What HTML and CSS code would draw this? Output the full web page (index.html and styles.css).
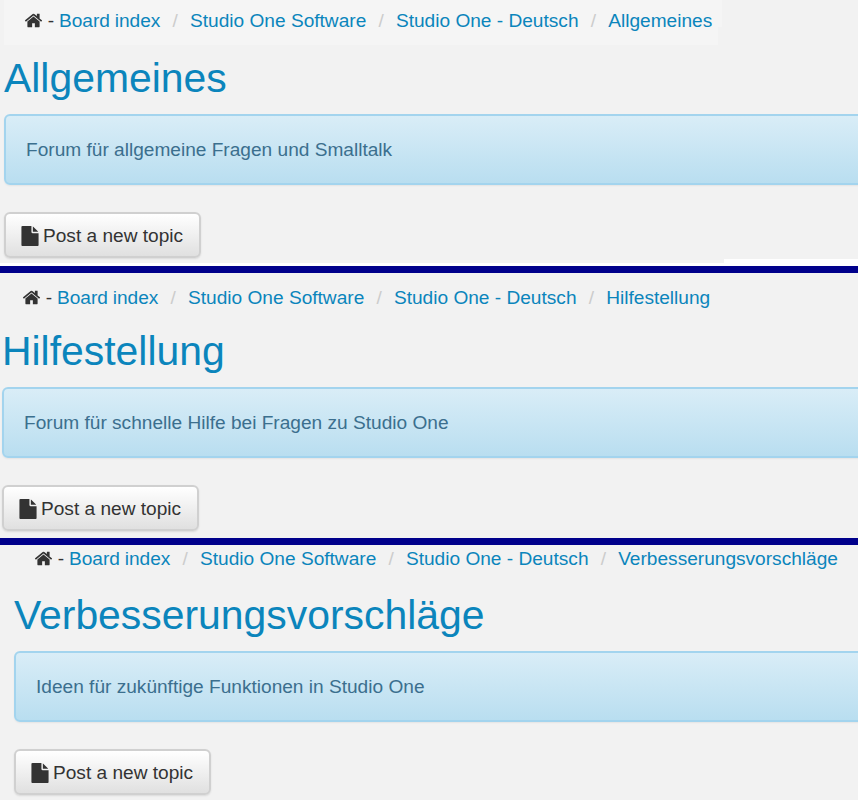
FILE: index.html
```html
<!DOCTYPE html>
<html lang="en">
<head>
  <meta charset="UTF-8">
  <meta name="viewport" content="width=device-width, initial-scale=1.0">
  <title>Forum overview</title>
  <link rel="stylesheet" href="styles.css">
</head>
<body>
  <svg class="icon-defs" width="0" height="0" aria-hidden="true">
    <symbol id="icon-home" viewBox="0 0 1792 1792">
      <path d="M1472 992v480q0 26-19 45t-45 19h-384v-384h-256v384h-384q-26 0-45-19t-19-45v-480q0-1 .5-3t.5-3l575-474 575 474q1 2 1 6zm223-69l-62 74q-8 9-21 11h-3q-13 0-21-7l-692-577-692 577q-12 8-24 7-13-2-21-11l-62-74q-8-10-7-23.500t11-21.500l719-599q32-26 76-26t76 26l244 204v-195q0-14 9-23t23-9h192q14 0 23 9t9 23v408l219 182q10 8 11 21.500t-7 23.500z"/>
    </symbol>
    <symbol id="icon-file" viewBox="0 0 1792 1792">
      <path d="M1152 512v-472q22 14 36 28l408 408q14 14 28 36h-472zm-128 32q0 40 28 68t68 28h544v1056q0 40-28 68t-68 28h-1344q-40 0-68-28t-28-68v-1600q0-40 28-68t68-28h800v544z"/>
    </symbol>
  </svg>

  <!-- Allgemeines -->
  <section class="forum forum-first">
    <ul class="breadcrumb">
      <li class="crumb-home"><svg class="icon-home"><use href="#icon-home"/></svg> - <a href="#">Board index</a></li>
      <li><a href="#">Studio One Software</a></li>
      <li><a href="#">Studio One - Deutsch</a></li>
      <li><a href="#">Allgemeines</a></li>
    </ul>
    <h1>Allgemeines</h1>
    <div class="alert">Forum für allgemeine Fragen und Smalltalk</div>
    <a class="btn" href="#"><svg class="icon-file"><use href="#icon-file"/></svg> Post a new topic</a>
  </section>
  <div class="crop-edge"><div class="crop-edge-fill"></div></div>
  <div class="divider"></div>

  <!-- Hilfestellung -->
  <section class="forum forum-second">
    <ul class="breadcrumb">
      <li class="crumb-home"><svg class="icon-home"><use href="#icon-home"/></svg> - <a href="#">Board index</a></li>
      <li><a href="#">Studio One Software</a></li>
      <li><a href="#">Studio One - Deutsch</a></li>
      <li><a href="#">Hilfestellung</a></li>
    </ul>
    <h1>Hilfestellung</h1>
    <div class="alert">Forum für schnelle Hilfe bei Fragen zu Studio One</div>
    <a class="btn" href="#"><svg class="icon-file"><use href="#icon-file"/></svg> Post a new topic</a>
  </section>
  <div class="divider"></div>

  <!-- Verbesserungsvorschläge -->
  <section class="forum forum-third">
    <ul class="breadcrumb">
      <li class="crumb-home"><svg class="icon-home"><use href="#icon-home"/></svg> - <a href="#">Board index</a></li>
      <li><a href="#">Studio One Software</a></li>
      <li><a href="#">Studio One - Deutsch</a></li>
      <li><a href="#">Verbesserungsvorschläge</a></li>
    </ul>
    <h1>Verbesserungsvorschläge</h1>
    <div class="alert">Ideen für zukünftige Funktionen in Studio One</div>
    <a class="btn" href="#"><svg class="icon-file"><use href="#icon-file"/></svg> Post a new topic</a>
  </section>
</body>
</html>
```

FILE: styles.css
```css
html, body {
  height: 800px;
  overflow: hidden;
}

body {
  margin: 0;
  background: #f2f2f2;
  color: #333;
  font-family: "Liberation Sans", Arial, sans-serif;
  font-size: 19.1px;
}

a {
  color: #0b85bc;
  text-decoration: none;
}

.icon-defs {
  display: block;
}

.forum {
  margin-right: -30px;
}

.forum-first {
  height: 259px;
  padding-left: 4px;
}

.forum-second {
  height: 265px;
  padding-left: 2px;
}

.forum-third {
  padding-left: 14px;
}

.breadcrumb {
  display: flex;
  width: 718px;
  height: 45px;
  box-sizing: border-box;
  margin: 0;
  padding: 10px 0 0 20px;
  background:
    linear-gradient(#f5f5f5, #f5f5f5) 0 0 / 714px 45px no-repeat,
    linear-gradient(#f5f5f5, #f5f5f5) 0 0 / 100% 27px no-repeat;
  list-style: none;
  line-height: 22px;
  white-space: nowrap;
}

.forum-second .breadcrumb,
.forum-third .breadcrumb {
  width: auto;
  background: none;
}

.forum-second .breadcrumb {
  padding-top: 14px;
}

.forum-third .breadcrumb {
  height: 37px;
  padding-top: 3px;
}

.breadcrumb li + li::before {
  content: "/";
  padding: 0 12.2px;
  color: #ccc;
}

.crumb-home {
  word-spacing: -0.5px;
}

.icon-home {
  width: 19px;
  height: 19px;
  fill: #333;
  vertical-align: -3px;
}

h1 {
  height: 69px;
  margin: 0;
  color: #0b85bc;
  font-size: 40.9px;
  font-weight: 400;
  line-height: 66px;
}

.alert {
  height: 67px;
  padding-left: 20px;
  border: 2px solid #a3d4ee;
  border-radius: 6px;
  background: linear-gradient(to bottom, #d9edf7, #b9def0);
  box-shadow: 0 1px 2px rgba(0, 0, 0, 0.06);
  color: #3b6f8e;
  line-height: 67px;
}

.btn {
  display: inline-flex;
  align-items: center;
  gap: 3px;
  box-sizing: border-box;
  width: 197px;
  height: 46px;
  margin-top: 27px;
  padding: 1px 0 0 14px;
  border: 2px solid #d0d0d0;
  border-radius: 6px;
  background: linear-gradient(to bottom, #fff, #e0e0e0);
  box-shadow: 0 1px 2px rgba(0, 0, 0, 0.1);
  color: #333;
}

.icon-file {
  flex: none;
  width: 20px;
  height: 20px;
  fill: #333;
}

.crop-edge {
  height: 7px;
  background: #fff;
}

.crop-edge-fill {
  width: 724px;
  height: 4px;
  background: #f2f2f2;
}

.divider {
  height: 7px;
  background: #00008b;
}
```
